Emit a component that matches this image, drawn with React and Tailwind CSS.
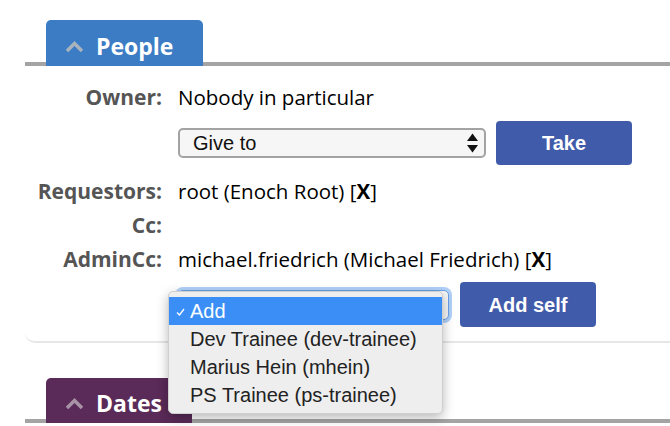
import React from 'react';

const Chevron = ({ color }) => (
  <svg width="19" height="13" viewBox="0 0 19 13" className="shrink-0">
    <polyline points="2,11 9.5,3.5 17,11" fill="none" stroke={color} strokeWidth="3.5" />
  </svg>
);

const SectionHeader = ({ title, tabClass, chevronColor, className }) => (
  <div className={`ml-[25px] border-b-4 border-[#a4a4a4] flex ${className}`}>
    <div className={`relative ml-[21px] -mb-[4px] rounded-t-[5px] flex items-center pl-[19px] pt-[6px] gap-[12px] ${tabClass}`}>
      <Chevron color={chevronColor} />
      <span className="text-white font-bold text-[23px] leading-none">{title}</span>
    </div>
  </div>
);

const UpDown = () => (
  <svg width="11" height="20" viewBox="0 0 11 20" className="shrink-0">
    <polygon points="5.5,0.5 11,8 0,8" fill="#111" />
    <polygon points="0,12 11,12 5.5,19.5" fill="#111" />
  </svg>
);

const Row = ({ label, children, className = '' }) => (
  <div className={`flex h-[34px] items-center ${className}`}>
    <div className="w-[137px] text-right font-bold text-[#555555]">{label}</div>
    <div className="ml-[16px] text-[#000000] text-[20.5px]">{children}</div>
  </div>
);

const addOptions = ['Dev Trainee (dev-trainee)', 'Marius Hein (mhein)', 'PS Trainee (ps-trainee)'];

export default function App() {
  return (
    <div className="w-[670px] h-[426px] overflow-hidden bg-white pt-[20px] font-['Open_Sans',sans-serif] text-[21px] leading-[34px]">
      <SectionHeader
        title="People"
        tabClass="h-[46px] w-[157px] bg-[#3b7cc5]"
        chevronColor="#a9b3bd"
      />

      <div className="ml-[25px] border-b-2 border-[#e6e6e6] rounded-bl-[10px] pt-[14px] pb-[14px]">
        <Row label="Owner:">Nobody in particular</Row>

        <div className="flex items-center h-[44px] mt-[7px] pl-[153px]">
          <div className="w-[308px] h-[30px] rounded-[5px] border-2 border-[#a3a3a3] bg-[#f6f6f6] flex items-center pl-[13px] pr-[6px] font-['Liberation_Sans',sans-serif] text-[20px] leading-none text-[#111111]">
            <span className="flex-1">Give to</span>
            <UpDown />
          </div>
          <button className="ml-[10px] w-[136px] h-[44px] rounded-[4px] bg-[#3f5ba9] text-white font-bold text-[20px] font-['Liberation_Sans',sans-serif]">
            Take
          </button>
        </div>

        <Row label="Requestors:" className="mt-[9px]">
          root (Enoch Root) [<b>X</b>]
        </Row>
        <Row label="Cc:" />
        <Row label="AdminCc:">
          michael.friedrich (Michael Friedrich) [<b>X</b>]
        </Row>

        <div className="flex items-center h-[45px] mt-[6px] pl-[153px]">
          <div className="relative w-[271px] h-[30px] rounded-[5px] border border-[#6a9fe6] bg-[#f6f6f6] shadow-[0_0_0_3px_rgba(80,150,240,0.45)]">
            <div className="absolute left-[-11px] top-0 w-[275px] pt-[5px] pb-[4px] rounded-[5px] border border-[#cfcfcf] bg-[#eeeeee] shadow-[0_4px_12px_rgba(0,0,0,0.28)] z-10 font-['Liberation_Sans',sans-serif] text-[20px] leading-none">
              <div className="relative h-[28px] flex items-center pl-[21px] bg-[#3a8ef6] text-white">
                <svg width="9" height="8" viewBox="0 0 9 8" className="absolute left-[7px] top-[11px]">
                  <polyline points="1,4.5 3.5,7 8,1" fill="none" stroke="#ffffff" strokeWidth="1.3" />
                </svg>
                Add
              </div>
              {addOptions.map((opt) => (
                <div key={opt} className="h-[28px] flex items-center pl-[21px] text-[#222222]">
                  {opt}
                </div>
              ))}
            </div>
          </div>
          <button className="ml-[11px] w-[136px] h-[45px] rounded-[4px] bg-[#3f5ba9] text-white font-bold text-[20px] font-['Liberation_Sans',sans-serif]">
            Add self
          </button>
        </div>
      </div>

      <SectionHeader
        title="Dates"
        className="mt-[35px]"
        tabClass="h-[45px] w-[146px] bg-[#5a2a58]"
        chevronColor="#a893a6"
      />
    </div>
  );
}
